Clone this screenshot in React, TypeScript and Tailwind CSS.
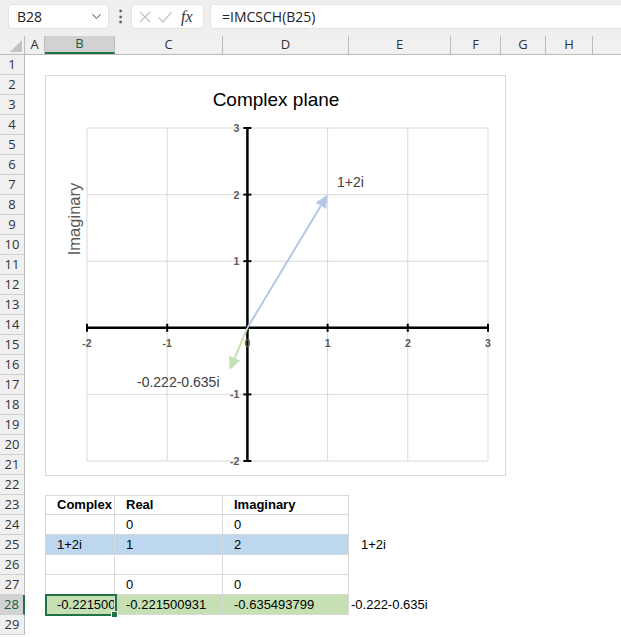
import React from "react";
import { ChevronDown } from "lucide-react";

const COLS: { k: string; w: string }[] = [
  { k: "A", w: "w-[20px]" },
  { k: "B", w: "w-[70px]" },
  { k: "C", w: "w-[108px]" },
  { k: "D", w: "w-[126px]" },
  { k: "E", w: "w-[102px]" },
  { k: "F", w: "w-[50px]" },
  { k: "G", w: "w-[45px]" },
  { k: "H", w: "w-[47px]" },
  { k: "", w: "w-[40px]" },
];

type Cell = { t?: string; bold?: boolean; bg?: string; border?: boolean; pl?: string };

function rowCells(r: number): Record<string, Cell> {
  const tb = (t: string, extra: Partial<Cell> = {}): Cell => ({ t, border: true, pl: "pl-[11px]", ...extra });
  switch (r) {
    case 23:
      return { B: tb("Complex", { bold: true }), C: tb("Real", { bold: true }), D: tb("Imaginary", { bold: true }) };
    case 24:
      return { B: tb(""), C: tb("0"), D: tb("0") };
    case 25:
      return {
        B: tb("1+2i", { bg: "bg-[#bdd7ee]" }),
        C: tb("1", { bg: "bg-[#bdd7ee]" }),
        D: tb("2", { bg: "bg-[#bdd7ee]" }),
        E: { t: "1+2i", pl: "pl-[12px]" },
      };
    case 26:
      return { B: tb(""), C: tb(""), D: tb("") };
    case 27:
      return { B: tb(""), C: tb("0"), D: tb("0") };
    case 28:
      return {
        B: tb("-0.221500", { bg: "bg-[#c6e0b4]" }),
        C: tb("-0.221500931", { bg: "bg-[#c6e0b4]" }),
        D: tb("-0.635493799", { bg: "bg-[#c6e0b4]" }),
        E: { t: "-0.222-0.635i", pl: "pl-[2px]" },
      };
    default:
      return {};
  }
}

const X0 = 41;
const UX = 80.2;
const Y3 = 52;
const UY = 66.6;
const px = (v: number) => X0 + (v + 2) * UX;
const py = (v: number) => Y3 + (3 - v) * UY;

function Arrow({ x, y, color }: { x: number; y: number; color: string }) {
  const ox = px(0);
  const oy = py(0);
  const dx = x - ox;
  const dy = y - oy;
  const len = Math.sqrt(dx * dx + dy * dy);
  const ux = dx / len;
  const uy = dy / len;
  const hl = 13;
  const hw = 6;
  const bx = x - ux * hl;
  const by = y - uy * hl;
  const p1 = `${bx + -uy * hw},${by + ux * hw}`;
  const p2 = `${bx - -uy * hw},${by - ux * hw}`;
  return (
    <g>
      <line x1={ox} y1={oy} x2={bx} y2={by} stroke={color} strokeWidth={2} />
      <polygon points={`${x},${y} ${p1} ${p2}`} fill={color} />
    </g>
  );
}

function Chart() {
  const xs = [-2, -1, 0, 1, 2, 3];
  const ys = [3, 2, 1, 0, -1, -2];
  const f = "'Liberation Sans', Arial, sans-serif";
  return (
    <div className="absolute left-[45px] top-[20px] w-[461px] h-[401px] bg-white border border-[#d9d9d9]">
      <svg width="459" height="399" viewBox="0 0 459 399" className="block">
        {xs.map((v) => (
          <line key={"gx" + v} x1={px(v)} y1={py(3)} x2={px(v)} y2={py(-2)} stroke="#d9d9d9" strokeWidth={1} />
        ))}
        {ys.map((v) => (
          <line key={"gy" + v} x1={px(-2)} y1={py(v)} x2={px(3)} y2={py(v)} stroke="#d9d9d9" strokeWidth={1} />
        ))}
        <text x={230} y={30} textAnchor="middle" fontFamily={f} fontSize={19} fill="#000">
          Complex plane
        </text>
        <text
          x={34}
          y={143}
          textAnchor="middle"
          fontFamily={f}
          fontSize={16.5}
          fill="#595959"
          transform="rotate(-90 34 143)"
        >
          Imaginary
        </text>
        <line x1={px(-2)} y1={py(0)} x2={px(3)} y2={py(0)} stroke="#000" strokeWidth={2.5} />
        <line x1={px(0)} y1={py(3)} x2={px(0)} y2={py(-2)} stroke="#000" strokeWidth={2.5} />
        {xs.map((v) => (
          <line key={"tx" + v} x1={px(v)} y1={py(0) - 4} x2={px(v)} y2={py(0) + 4} stroke="#000" strokeWidth={2} />
        ))}
        {ys.map((v) => (
          <line key={"ty" + v} x1={px(0) - 4} y1={py(v)} x2={px(0) + 4} y2={py(v)} stroke="#000" strokeWidth={2} />
        ))}
        {xs.map((v) => (
          <text
            key={"lx" + v}
            x={px(v)}
            y={py(0) + 19}
            textAnchor="middle"
            fontFamily={f}
            fontSize={10.5}
            fontWeight={700}
            fill="#595959"
          >
            {v}
          </text>
        ))}
        {ys.map((v) =>
          v === 0 ? null : (
            <text
              key={"ly" + v}
              x={px(0) - 8}
              y={py(v) + 4}
              textAnchor="end"
              fontFamily={f}
              fontSize={10.5}
              fontWeight={700}
              fill="#595959"
            >
              {v}
            </text>
          )
        )}
        <Arrow x={px(1)} y={py(2)} color="#b4c7e7" />
        <Arrow x={px(-0.2215)} y={py(-0.6355)} color="#c5e0b4" />
        <text x={291} y={111} fontFamily={f} fontSize={14} fill="#404040">
          1+2i
        </text>
        <text x={91} y={311} fontFamily={f} fontSize={14} fill="#404040">
          -0.222-0.635i
        </text>
      </svg>
    </div>
  );
}

export default function App() {
  const rows = Array.from({ length: 29 }, (_, i) => i + 1);
  return (
    <div className="w-[621px] h-[637px] overflow-hidden bg-white font-['Liberation_Sans',Arial,sans-serif] text-[13px] text-black">
      {/* toolbar */}
      <div className="h-[36px] bg-[#efefef] flex items-start pt-[4px] pl-[8px]">
        <div className="w-[101px] h-[25px] shrink-0 bg-white rounded-[4px] border border-[#e3e3e3] flex items-center justify-between pl-[8px] pr-[4px]">
          <span className="font-['Open_Sans',sans-serif] text-[14px] text-[#222]">B28</span>
          <ChevronDown size={15} strokeWidth={1.6} className="text-[#444]" />
        </div>
        <div className="w-[22px] h-[25px] shrink-0 flex items-center justify-center text-[#555] text-[15px] font-bold">⋮</div>
        <div className="w-[73px] h-[25px] shrink-0 bg-white rounded-[4px] border border-[#e3e3e3] flex items-center pl-[6px] gap-[5px]">
          <svg width="14" height="14" viewBox="0 0 14 14">
            <path d="M2 2 L12 12 M12 2 L2 12" stroke="#c4c4c4" strokeWidth="1.3" fill="none" />
          </svg>
          <svg width="16" height="14" viewBox="0 0 16 14">
            <path d="M1.5 7.5 L6 12 L14.5 2" stroke="#c4c4c4" strokeWidth="1.3" fill="none" />
          </svg>
          <span className="font-['Liberation_Serif',serif] italic text-[16px] text-[#333] ml-[3px] leading-none">
            fx
          </span>
        </div>
        <div className="ml-[6px] flex-1 h-[25px] bg-white rounded-l-[4px] border border-[#e3e3e3] border-r-0 flex items-center pl-[11px]">
          <span className="font-['Open_Sans',sans-serif] text-[14px] text-[#222]">=IMCSCH(B25)</span>
        </div>
      </div>
      {/* column headers */}
      <div className="h-[19px] flex bg-[#f0f0f0] border-b border-[#bcbcbc] font-['Open_Sans',sans-serif] text-[13px] text-[#333]">
        <div className="w-[25px] shrink-0 h-full relative border-r border-[#bcbcbc]">
          <div className="absolute right-[2px] bottom-[2px] w-0 h-0 border-l-[12px] border-l-transparent border-b-[12px] border-b-[#c3c3c3]" />
        </div>
        {COLS.map((c) => (
          <div
            key={c.k || "z"}
            className={`${c.w} shrink-0 h-full flex items-center justify-center border-r border-[#bcbcbc] ${
              c.k === "B" ? "bg-[#d2d2d2] border-b-2 border-b-[#217346] text-[#185c37]" : ""
            }`}
          >
            {c.k}
          </div>
        ))}
      </div>
      {/* body */}
      <div className="relative">
        {rows.map((r) => {
          const cells = rowCells(r);
          const sel = r === 28;
          return (
            <div key={r} className="h-[20px] flex">
              <div
                className={`w-[25px] shrink-0 h-full flex items-center justify-center border-b border-[#d0d0d0] font-['Open_Sans',sans-serif] text-[13px] ${
                  sel
                    ? "bg-[#d2d2d2] border-r-2 border-r-[#217346] text-[#185c37]"
                    : "bg-[#f0f0f0] border-r border-r-[#bcbcbc] text-[#333]"
                }`}
              >
                {r}
              </div>
              {COLS.map((c) => {
                const cell = cells[c.k];
                const isB = c.k === "B";
                const top = r === 23 && cell?.border;
                return (
                  <div
                    key={c.k || "z"}
                    className={`${c.w} shrink-0 h-full relative whitespace-nowrap flex items-center ${
                      sel && isB ? "z-10" : ""
                    } ${cell?.bg ?? ""} ${cell?.border ? "border-r border-b border-[#d9d9d9]" : ""} ${
                      cell?.border && isB ? "border-l" : ""
                    } ${top ? "border-t" : ""} ${cell?.pl ?? ""} ${cell?.bold ? "font-bold" : ""}`}
                  >
                    {cell?.t ? (
                      <span className={isB ? "block overflow-hidden w-[57px]" : "block"}>{cell.t}</span>
                    ) : null}
                    {sel && isB ? (
                      <>
                        <div className="absolute left-[-1px] top-[-1px] w-[72px] h-[22px] border-2 border-[#217346] pointer-events-none" />
                        <div className="absolute right-[-4px] bottom-[-4px] w-[7px] h-[7px] bg-[#217346] border border-white" />
                      </>
                    ) : null}
                  </div>
                );
              })}
            </div>
          );
        })}
        <Chart />
      </div>
    </div>
  );
}
